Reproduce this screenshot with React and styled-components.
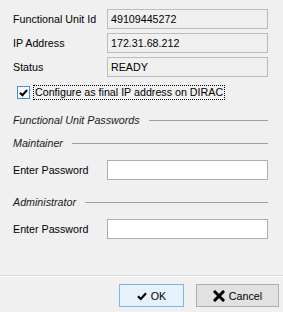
import React from 'react'
import styled, { createGlobalStyle } from 'styled-components'

const Global = createGlobalStyle`
  html, body {
    margin: 0;
    padding: 0;
    background: #f0f0f0;
  }
  body {
    font-family: "Liberation Sans", Arial, sans-serif;
    font-size: 10.7px;
    color: #000;
  }
`

const Dialog = styled.div`
  width: 283px;
  height: 312px;
  display: flex;
  flex-direction: column;
  background: #f0f0f0;
`

const Body = styled.div`
  flex: 1;
  padding: 9px 15px 0 13px;
  display: flex;
  flex-direction: column;
`

const Row = styled.div`
  display: flex;
  align-items: center;
  height: 20px;
  margin-bottom: ${p => p.$gap ?? 4}px;
`

const Label = styled.div`
  width: 94px;
  flex-shrink: 0;
`

const Field = styled.div`
  flex: 1;
  height: 18px;
  border: 1px solid ${p => (p.$readOnly ? '#bcbcbc' : '#adadad')};
  background: ${p => (p.$readOnly ? '#f0f0f0' : '#fff')};
  display: flex;
  align-items: center;
  padding-left: 3px;
`

const CheckRow = styled.label`
  display: flex;
  align-items: center;
  margin: 8px 0 0 4px;
  height: 15px;
`

const Box = styled.span`
  width: 11px;
  height: 11px;
  border: 1px solid #3a8fe0;
  background: #fff;
  display: flex;
  align-items: center;
  justify-content: center;
  margin-right: 4px;
`

const Focus = styled.span`
  outline: 1px dotted #000;
  padding: 0 1px;
  line-height: 13px;
`

const Section = styled.div`
  display: flex;
  align-items: center;
  font-style: italic;
  color: #1a1a1a;
  height: 14px;
  margin-top: ${p => p.$top}px;
  margin-bottom: ${p => p.$bottom}px;

  &::after {
    content: '';
    flex: 1;
    height: 1px;
    background: #a0a0a0;
    margin-left: 9px;
  }
`

const Footer = styled.div`
  border-top: 1px solid #dcdcdc;
  box-shadow: inset 0 1px 0 #fff;
  height: 37px;
  display: flex;
  justify-content: flex-end;
  align-items: flex-start;
  padding: 8px 4px 0 0;
  box-sizing: border-box;
  gap: 12px;
`

const Button = styled.div`
  height: 21px;
  width: ${p => p.$w}px;
  border: 1px solid ${p => (p.$primary ? '#7eb4ea' : '#adadad')};
  background: ${p => (p.$primary ? '#e5f1fb' : '#e1e1e1')};
  display: flex;
  align-items: center;
  justify-content: center;
  gap: 4px;
`

const CheckIcon = ({ size = 10 }) => (
  <svg width={size} height={size} viewBox="0 0 10 10">
    <path d="M1 5.2 L3.8 8 L9 2.2" fill="none" stroke="#000" strokeWidth="2.2" />
  </svg>
)

const CrossIcon = () => (
  <svg width="12" height="12" viewBox="0 0 12 12">
    <path d="M2 2 L10 10 M10 2 L2 10" stroke="#000" strokeWidth="3" strokeLinecap="square" />
  </svg>
)

export default function App() {
  return (
    <Dialog>
      <Global />
      <Body>
        <Row>
          <Label>Functional Unit Id</Label>
          <Field $readOnly>49109445272</Field>
        </Row>
        <Row>
          <Label>IP Address</Label>
          <Field $readOnly>172.31.68.212</Field>
        </Row>
        <Row $gap={0}>
          <Label>Status</Label>
          <Field $readOnly>READY</Field>
        </Row>
        <CheckRow>
          <Box>
            <CheckIcon size={9} />
          </Box>
          <Focus>Configure as final IP address on DIRAC</Focus>
        </CheckRow>
        <Section $top={13} $bottom={9}>Functional Unit Passwords</Section>
        <Section $top={0} $bottom={10}>Maintainer</Section>
        <Row>
          <Label>Enter Password</Label>
          <Field />
        </Row>
        <Section $top={11} $bottom={10}>Administrator</Section>
        <Row>
          <Label>Enter Password</Label>
          <Field />
        </Row>
      </Body>
      <Footer>
        <Button $primary $w={63}>
          <CheckIcon />
          <span>OK</span>
        </Button>
        <Button $w={81}>
          <CrossIcon />
          <span>Cancel</span>
        </Button>
      </Footer>
    </Dialog>
  )
}
